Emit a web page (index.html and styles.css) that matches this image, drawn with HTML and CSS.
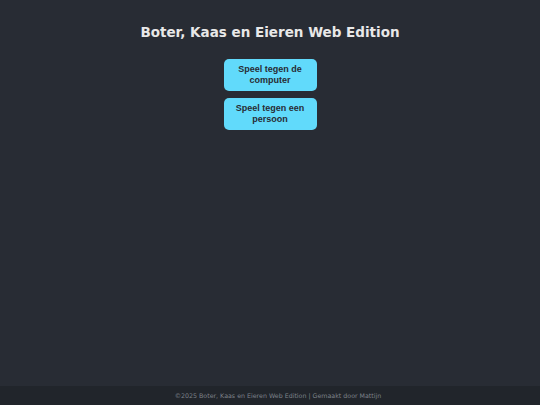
FILE: index.html
```html
<!DOCTYPE html>
<html lang="nl">
<head>
<meta charset="utf-8">
<title>Boter, Kaas en Eieren Web Edition</title>
<link rel="stylesheet" href="styles.css">
</head>
<body>
<main class="main">
  <h1 class="title">Boter, Kaas en Eieren Web Edition</h1>
  <div class="menu">
    <button class="btn">Speel tegen de<br>computer</button>
    <button class="btn">Speel tegen een<br>persoon</button>
  </div>
</main>
<footer class="footer">©2025 Boter, Kaas en Eieren Web Edition | Gemaakt door Mattijn</footer>
</body>
</html>
```

FILE: styles.css
```css
html, body {
  margin: 0;
  padding: 0;
  height: 100%;
}
body {
  background: #282c34;
  display: flex;
  flex-direction: column;
  min-height: 100vh;
  font-family: "DejaVu Sans", sans-serif;
}
.main {
  flex: 1;
  display: flex;
  flex-direction: column;
  align-items: center;
}
.title {
  margin: 23px 0 0;
  font-size: 13.5px;
  line-height: 18px;
  font-weight: bold;
  color: #e8e8e8;
}
.menu {
  margin-top: 18px;
  display: flex;
  flex-direction: column;
  gap: 7px;
}
.btn {
  width: 93px;
  height: 32px;
  padding: 0;
  border: none;
  border-radius: 5px;
  background: #61dafb;
  color: #282c34;
  font-family: "Liberation Sans", Arial, sans-serif;
  font-weight: bold;
  font-size: 9px;
  line-height: 11px;
  text-align: center;
}
.footer {
  height: 19px;
  padding-left: 16px;
  background: #21252b;
  color: #7d828a;
  font-size: 6.3px;
  line-height: 19px;
  text-align: center;
}
```
